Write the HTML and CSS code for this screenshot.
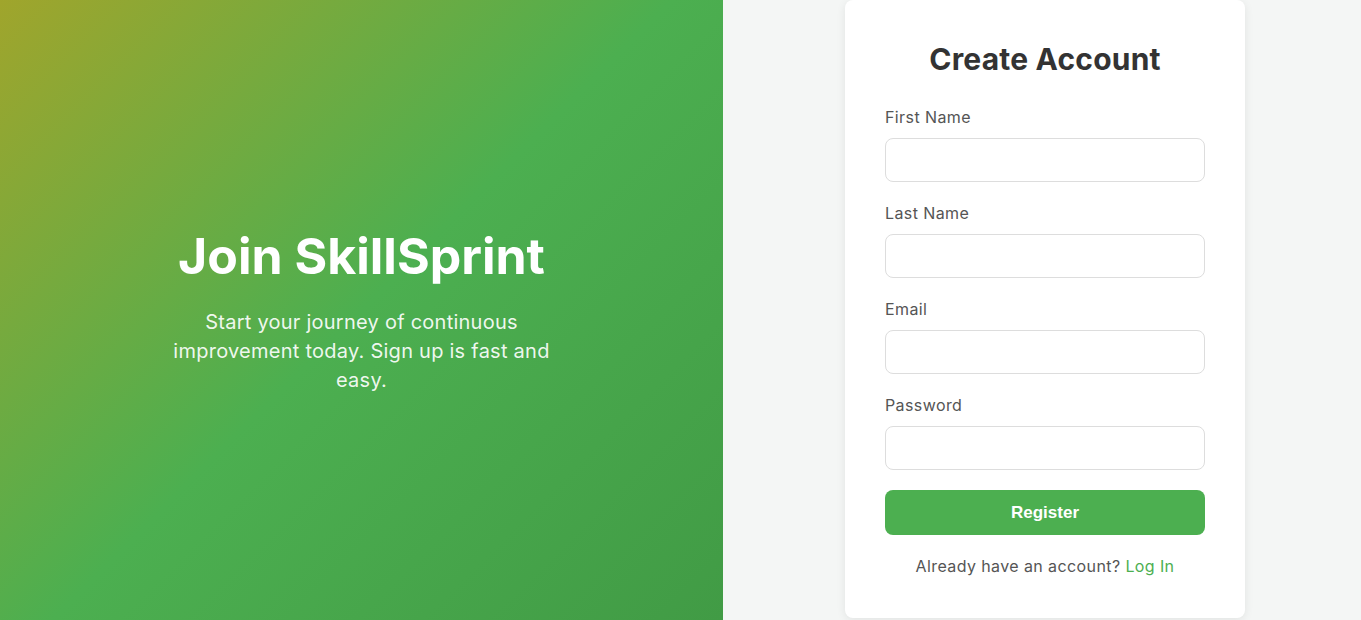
FILE: index.html
```html
<!DOCTYPE html>
<html lang="en">
<head>
<meta charset="utf-8">
<title>Join SkillSprint</title>
<link rel="stylesheet" href="styles.css">
</head>
<body>
<div class="page">
  <section class="hero">
    <h1 class="hero-title">Join SkillSprint</h1>
    <p class="hero-text">Start your journey of continuous improvement today. Sign up is fast and easy.</p>
  </section>
  <section class="side">
    <form class="card">
      <h2 class="card-title">Create Account</h2>
      <div class="field">
        <label class="field-label">First Name</label>
        <input class="field-input" type="text">
      </div>
      <div class="field">
        <label class="field-label">Last Name</label>
        <input class="field-input" type="text">
      </div>
      <div class="field">
        <label class="field-label">Email</label>
        <input class="field-input" type="email">
      </div>
      <div class="field">
        <label class="field-label">Password</label>
        <input class="field-input" type="password">
      </div>
      <button class="btn" type="button">Register</button>
      <p class="footer-text">Already have an account? <a class="link" href="#">Log In</a></p>
    </form>
  </section>
</div>
</body>
</html>
```
FILE: styles.css
```css
* { box-sizing: border-box; }
html, body { margin: 0; padding: 0; }
body {
  font-family: "Inter", "Noto Sans", sans-serif;
  background: #f4f6f5;
}
.page {
  display: flex;
  height: 620px;
}
.hero {
  width: 723px;
  flex-shrink: 0;
  display: flex;
  flex-direction: column;
  align-items: center;
  justify-content: center;
  background: linear-gradient(135deg, #a0a52c 0%, #4caf50 50%, #419b45 100%);
  color: #fff;
  text-align: center;
}
.hero-title {
  margin: 0 0 22px;
  font-size: 50px;
  font-weight: 700;
  line-height: 60px;
}
.hero-text {
  margin: 0;
  width: 400px;
  font-size: 20px;
  letter-spacing: 0.25px;
  line-height: 29px;
  color: rgba(255,255,255,0.92);
}
.side {
  flex: 1;
  display: flex;
  justify-content: center;
  align-items: flex-start;
  padding-left: 6px;
}
.card {
  width: 400px;
  background: #fff;
  border-radius: 8px;
  box-shadow: 0 2px 10px rgba(0,0,0,0.08);
  padding: 38px 40px 41px;
  display: flex;
  flex-direction: column;
}
.card-title {
  margin: 0 0 26px;
  text-align: center;
  font-size: 30px;
  letter-spacing: 0.2px;
  line-height: 42px;
  font-weight: 700;
  color: #333;
}
.field {
  display: flex;
  flex-direction: column;
  margin-bottom: 20px;
}
.field-label {
  font-size: 16px;
  letter-spacing: 0.4px;
  line-height: 22px;
  color: #555;
  margin-bottom: 10px;
}
.field-input {
  height: 44px;
  border: 1px solid #ddd;
  border-radius: 8px;
  background: #fff;
  padding: 0 12px;
  font-size: 15px;
}
.btn {
  height: 45px;
  border: none;
  border-radius: 8px;
  background: #4caf50;
  color: #fff;
  font-family: "Liberation Sans", Arial, sans-serif;
  font-size: 17px;
  font-weight: 700;
  cursor: pointer;
}
.footer-text {
  margin: 20px 0 0;
  text-align: center;
  font-size: 16px;
  letter-spacing: 0.4px;
  line-height: 22px;
  color: #555;
}
.link {
  color: #4caf50;
  text-decoration: none;
}
```
